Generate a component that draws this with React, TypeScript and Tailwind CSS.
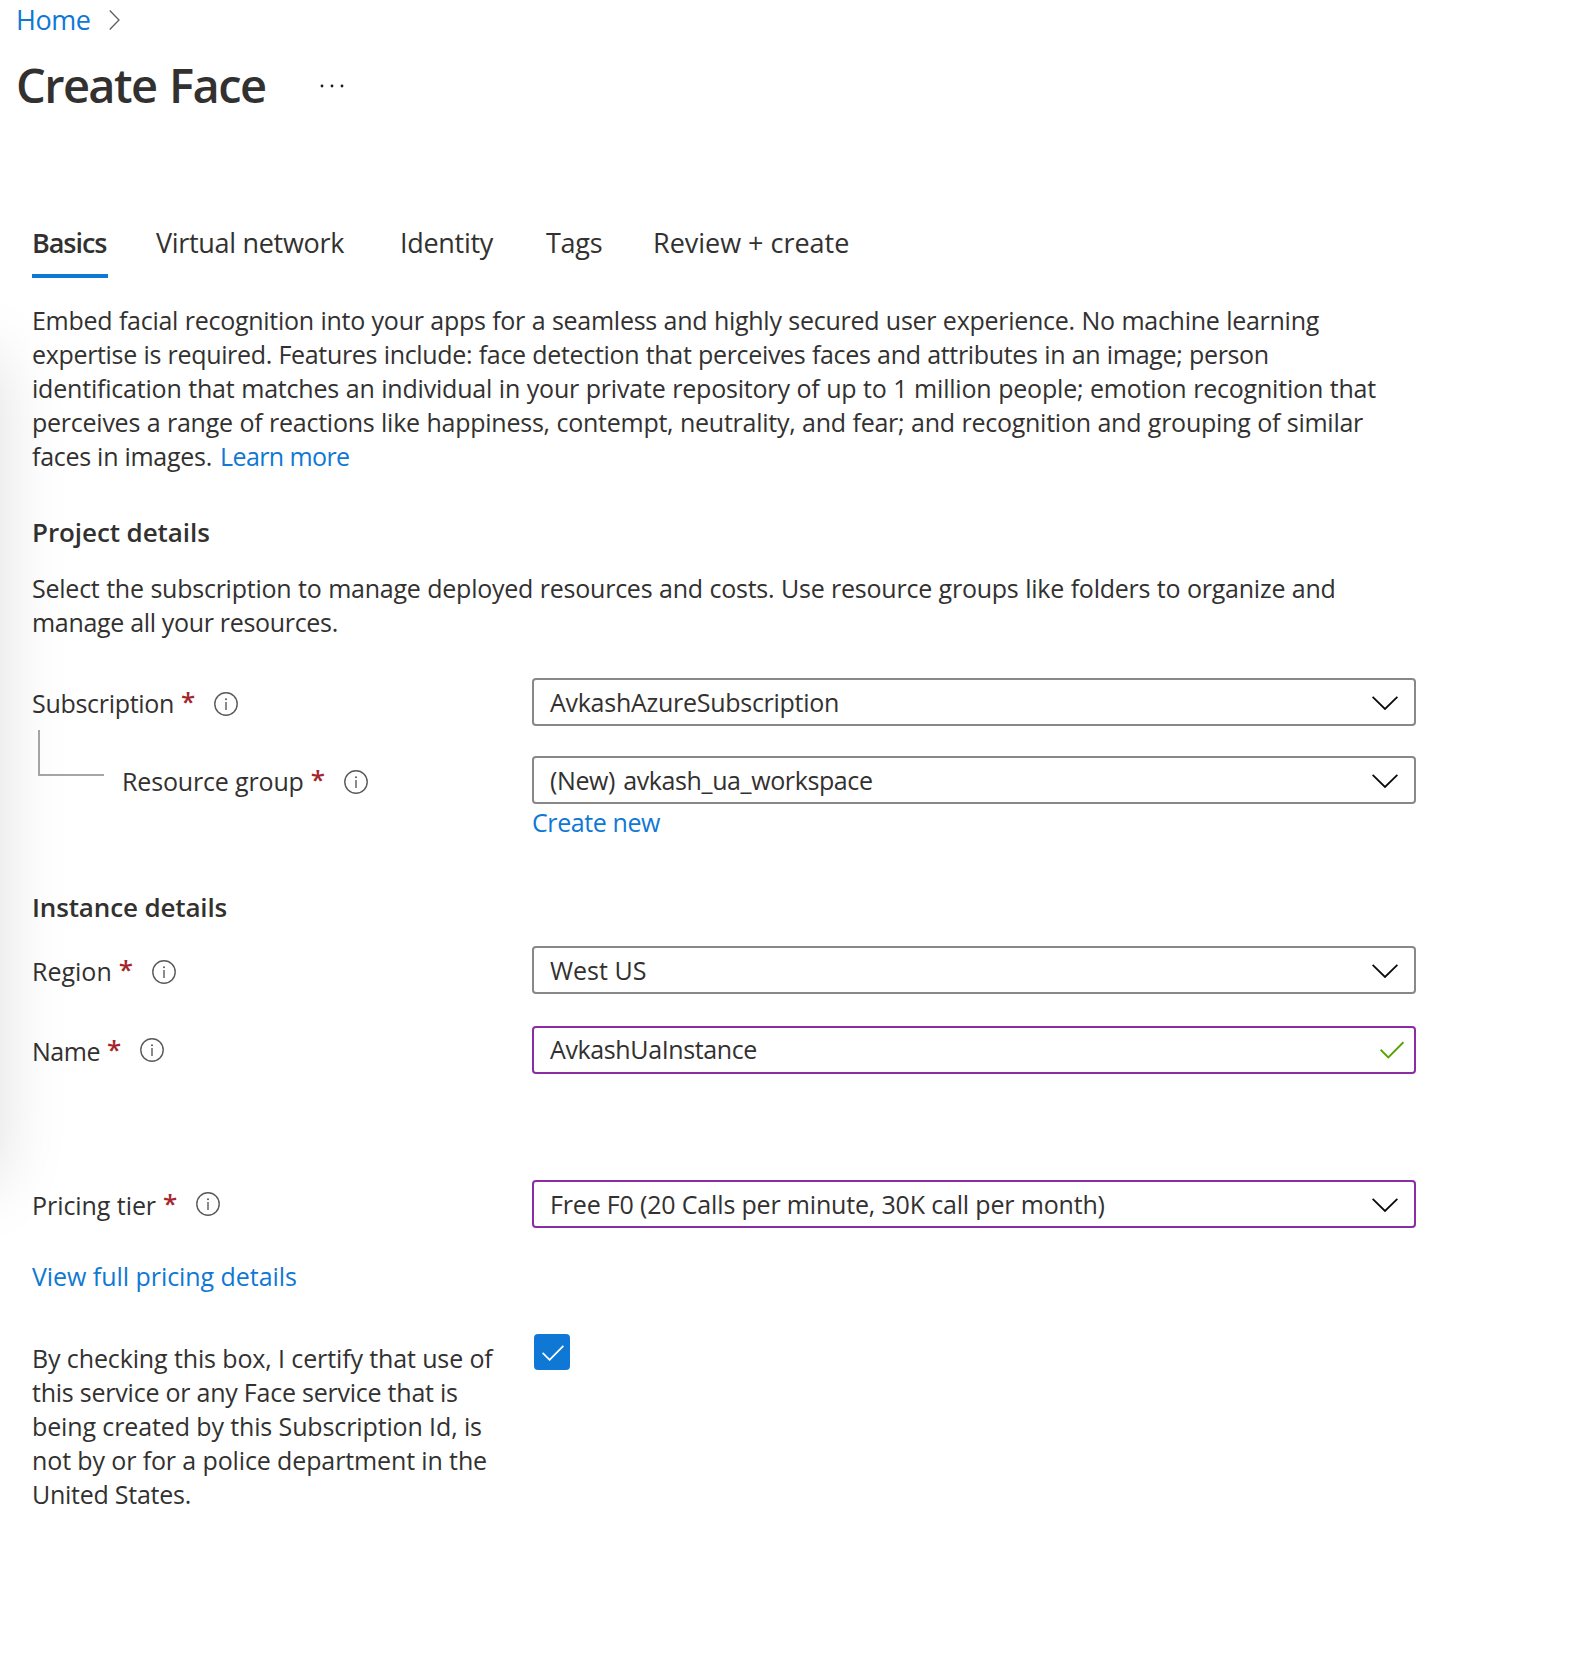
import React from "react";

const LINK = "text-[#0f78d4]";

function InfoIcon({ className = "" }: { className?: string }) {
  return (
    <svg className={`size-6 shrink-0 ${className}`} viewBox="0 0 24 24" fill="none">
      <circle cx="12" cy="12" r="11.2" stroke="#5c5a58" strokeWidth="1.4" />
      <path d="M12 10v8" stroke="#5c5a58" strokeWidth="1.4" />
      <circle cx="12" cy="7.2" r="1" fill="#5c5a58" />
    </svg>
  );
}

function ChevronDown() {
  return (
    <svg className="mt-[2px] mr-4 h-[14px] w-[26px]" viewBox="0 0 26 14" fill="none">
      <path d="M0.6 0.8 13 13 25.4 0.8" stroke="#0b0b0b" strokeWidth="1.8" />
    </svg>
  );
}

function Label({ text, className = "", textClass = "", iconClass = "" }: { text: string; className?: string; textClass?: string; iconClass?: string }) {
  return (
    <div className={`flex h-[34px] items-start ${className}`}>
      <span className={textClass}>{text}</span>
      <span className="-mt-[2px] ml-[7px] w-[14px] text-[26px] font-semibold text-[#a4262c]">*</span>
      <InfoIcon className={`ml-[19px] ${iconClass}`} />
    </div>
  );
}

function Field({ text, textClass = "", accent = false, icon }: { text: string; textClass?: string; accent?: boolean; icon: React.ReactNode }) {
  return (
    <div
      className={`flex h-12 w-[884px] items-center justify-between rounded-[4px] border-2 bg-white pl-4 ${
        accent ? "border-[#8a2da5]" : "border-[#8a8886]"
      }`}
    >
      <span className={textClass}>{text}</span>
      {icon}
    </div>
  );
}

export default function App() {
  return (
    <div className="relative h-[1656px] w-[1574px] overflow-hidden bg-white font-['Open_Sans','Noto_Sans',sans-serif] text-[25px] leading-[34px] whitespace-nowrap text-[#323130]">
      <div className="pointer-events-none absolute top-[345px] -left-[400px] h-[825px] w-[400px] shadow-[0_12px_64px_rgba(0,0,0,0.13)]" />

      <nav className="flex h-[40px] items-start pl-4">
        <a className={`w-[93px] pt-[3px] text-[27px] tracking-[-0.5px] ${LINK}`}>Home</a>
        <svg className="mt-[10px] h-5 w-[11px]" viewBox="0 0 11 20" fill="none">
          <path d="M0.7 0.5 10 10 0.7 19.5" stroke="#605e5c" strokeWidth="1.3" />
        </svg>
      </nav>

      <header className="flex h-[186px] items-start pl-4">
        <h1 className="w-[304px] pt-[15px] text-[47px] leading-[60px] font-[650] tracking-[-1.6px] [word-spacing:2px]">Create Face</h1>
        <svg className="mt-[44px] h-1 w-6" viewBox="0 0 24 4" fill="#1b1a19">
          <circle cx="2" cy="2" r="1.4" />
          <circle cx="12" cy="2" r="1.4" />
          <circle cx="22" cy="2" r="1.4" />
        </svg>
      </header>

      <main className="pl-8">
        <div className="flex h-[52px] text-[27px]">
          <span className="h-[52px] w-[76px] border-b-4 border-[#0f78d4] font-[650] tracking-[-1.05px]">Basics</span>
          <span className="ml-12 w-[244px] tracking-[-0.31px]">Virtual network</span>
          <span className="w-[146px] tracking-[-0.3px]">Identity</span>
          <span className="w-[107px] tracking-[-0.25px]">Tags</span>
          <span className="tracking-[-0.02px]">Review + create</span>
        </div>

        <p className="mt-[25px]">
          <span className="block tracking-[-0.27px] [word-spacing:0.4px]">Embed facial recognition into your apps for a seamless and highly secured user experience. No machine learning</span>
          <span className="block tracking-[-0.33px] [word-spacing:0.4px]">expertise is required. Features include: face detection that perceives faces and attributes in an image; person</span>
          <span className="block tracking-[-0.2px] [word-spacing:0.4px]">identification that matches an individual in your private repository of up to 1 million people; emotion recognition that</span>
          <span className="block tracking-[-0.25px] [word-spacing:0.4px]">perceives a range of reactions like happiness, contempt, neutrality, and fear; and recognition and grouping of similar</span>
          <span className="flex">
            <span className="w-[188px] tracking-[-0.27px]">faces in images.</span>
            <a className={`tracking-[-0.6px] ${LINK}`}>Learn more</a>
          </span>
        </p>

        <h2 className="mt-[42px] text-[26px] font-[650] tracking-[-0.08px]">Project details</h2>
        <p className="mt-[22px]">
          <span className="block tracking-[-0.24px] [word-spacing:0.4px]">Select the subscription to manage deployed resources and costs. Use resource groups like folders to organize and</span>
          <span className="block tracking-[-0.32px]">manage all your resources.</span>
        </p>

        <div className="mt-[39px] flex h-[78px]">
          <div className="w-[500px]">
            <Label text="Subscription" className="mt-2" textClass="tracking-[-0.3px]" iconClass="mt-[6px]" />
            <div className="mt-[10px] ml-[6px] h-[46px] w-[66px] border-b-2 border-l-2 border-[#a6a6a6]" />
          </div>
          <Field text="AvkashAzureSubscription" textClass="tracking-[-0.27px]" icon={<ChevronDown />} />
        </div>
        <div className="flex h-[154px]">
          <div className="w-[500px] pl-[90px]">
            <Label text="Resource group" className="mt-2" textClass="tracking-[-0.16px]" iconClass="mt-[6px]" />
          </div>
          <div>
            <Field text="(New) avkash_ua_workspace" textClass="tracking-[-0.38px] [word-spacing:2px]" icon={<ChevronDown />} />
            <a className={`mt-[1px] block tracking-[-0.41px] ${LINK}`}>Create new</a>
          </div>
        </div>

        <h2 className="-mt-[20px] text-[26px] font-[650] tracking-[-0.14px]">Instance details</h2>
        <div className="mt-[22px] flex h-[80px]">
          <div className="w-[500px]">
            <Label text="Region" className="mt-2" iconClass="mt-[6px]" />
          </div>
          <Field text="West US" icon={<ChevronDown />} />
        </div>
        <div className="flex h-[154px]">
          <div className="w-[500px]">
            <Label text="Name" className="mt-2" textClass="tracking-[-0.47px]" iconClass="mt-[4px]" />
          </div>
          <Field
            accent
            text="AvkashUaInstance"
            textClass="pb-[3px] tracking-[-0.38px]"
            icon={
              <svg className="mr-[10px] h-[18px] w-6" viewBox="0 0 24 18" fill="none">
                <path d="M0.6 8.8 8.3 16.4 23.4 1.2" stroke="#57a300" strokeWidth="1.9" />
              </svg>
            }
          />
        </div>
        <div className="flex h-[79px]">
          <div className="w-[500px]">
            <Label text="Pricing tier" className="mt-2" textClass="tracking-[-0.06px]" iconClass="mt-[4px]" />
          </div>
          <Field accent text="Free F0 (20 Calls per minute, 30K call per month)" textClass="tracking-[-0.17px]" icon={<ChevronDown />} />
        </div>

        <a className={`block tracking-[-0.05px] ${LINK}`}>View full pricing details</a>

        <div className="mt-[41px] flex">
          <p className="mt-[7px] w-[502px]">
            <span className="block tracking-[-0.12px]">By checking this box, I certify that use of</span>
            <span className="block tracking-[-0.23px]">this service or any Face service that is</span>
            <span className="block tracking-[-0.12px]">being created by this Subscription Id, is</span>
            <span className="block tracking-[-0.12px]">not by or for a police department in the</span>
            <span className="block tracking-[-0.25px]">United States.</span>
          </p>
          <div className="flex size-9 items-center justify-center rounded-[4px] bg-[#0f78d4]">
            <svg className="mt-[2px] ml-[1px] h-4 w-[22px]" viewBox="0 0 22 16" fill="none">
              <path d="M0.6 7.8 7.6 14.8 21.4 0.8" stroke="#fff" strokeWidth="1.8" />
            </svg>
          </div>
        </div>
      </main>
    </div>
  );
}
